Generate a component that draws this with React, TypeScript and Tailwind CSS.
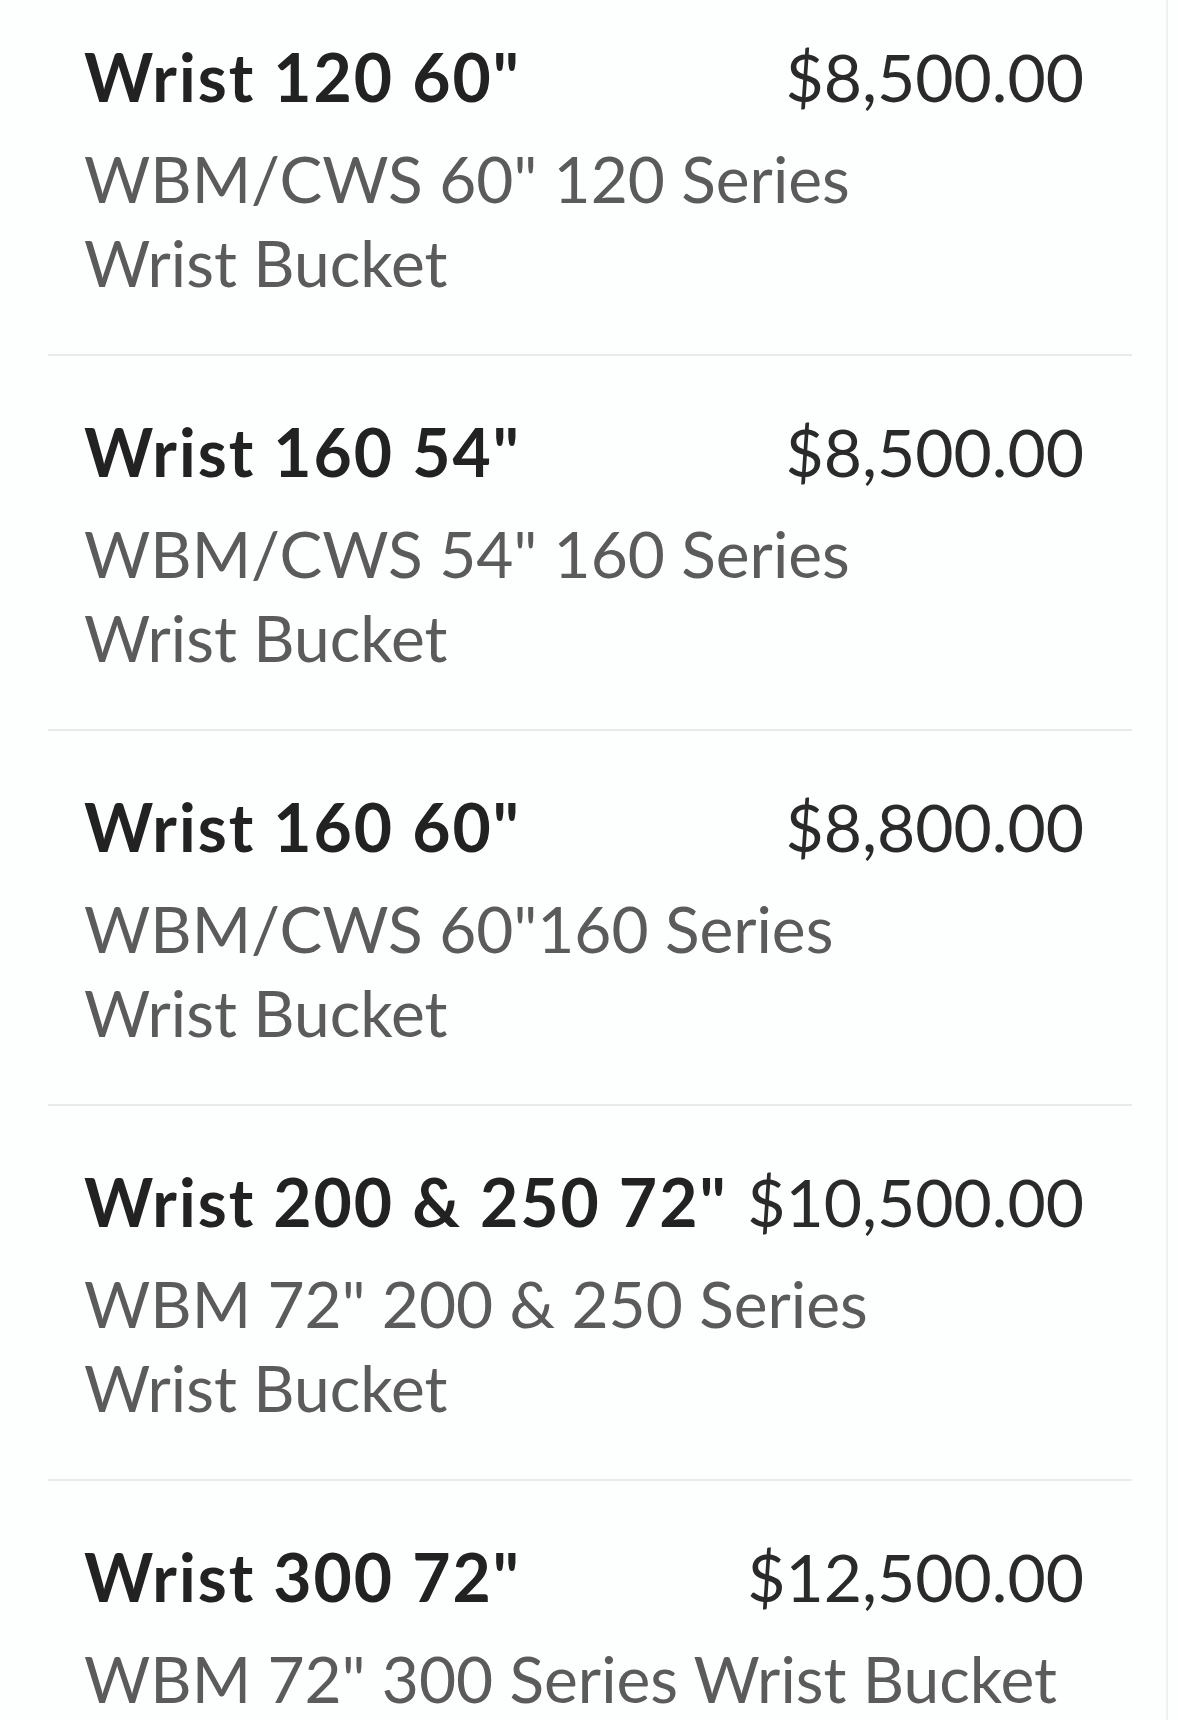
const items = [
  { name: 'Wrist 120 60"', price: "$8,500.00", desc: ['WBM/CWS 60" 120 Series', "Wrist Bucket"] },
  { name: 'Wrist 160 54"', price: "$8,500.00", desc: ['WBM/CWS 54" 160 Series', "Wrist Bucket"] },
  { name: 'Wrist 160 60"', price: "$8,800.00", desc: ['WBM/CWS 60"160 Series', "Wrist Bucket"] },
  { name: 'Wrist 200 & 250 72"', price: "$10,500.00", desc: ['WBM 72" 200 & 250 Series', "Wrist Bucket"] },
  { name: 'Wrist 300 72"', price: "$12,500.00", desc: ['WBM 72" 300 Series Wrist Bucket'] },
];

const App = () => {
  return (
    <div
      className="w-[1178px] h-[1720px] overflow-hidden bg-[#fdfefe]"
      style={{ fontFamily: "Lato, 'Noto Sans', sans-serif" }}
    >
      <div className="w-[1168px] h-full border-r-2 border-[#eef1f1] pl-12 pr-[34px]">
        {items.map((item, i) => (
          <div
            key={i}
            className={`border-b-2 border-[#e7ebeb] ${i === 0 ? "pt-[37px]" : "pt-[56px]"} pb-[49px] pl-[36px] pr-12`}
          >
            <div className="flex items-baseline justify-between gap-3">
              <span className="text-[66px] leading-[80px] font-bold tracking-[2px] text-[#222222] whitespace-nowrap">
                {item.name}
              </span>
              <span className="text-[66px] leading-[80px] text-[#2a2a2a] whitespace-nowrap">
                {item.price}
              </span>
            </div>
            <div className="mt-5 text-[64px] leading-[84px] text-[#5b5b5b]">
              {item.desc.map((line, j) => (
                <p key={j} className="whitespace-nowrap">
                  {line}
                </p>
              ))}
            </div>
          </div>
        ))}
      </div>
    </div>
  );
};

export default App;
